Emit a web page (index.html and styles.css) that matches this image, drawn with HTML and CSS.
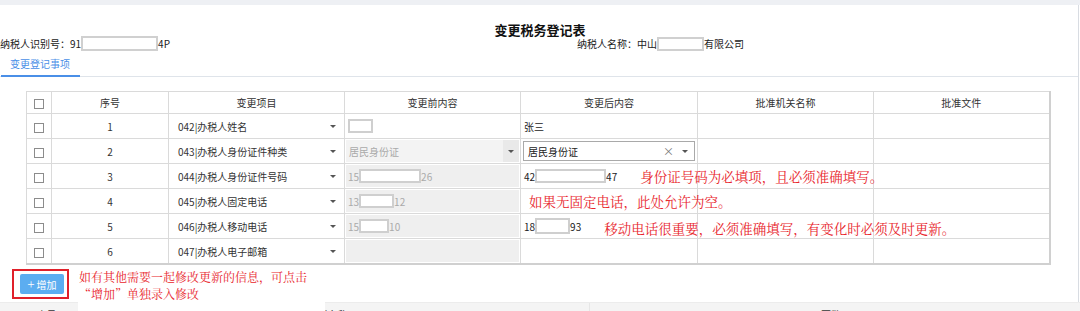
FILE: index.html
```html
<!DOCTYPE html>
<html lang="zh-CN">
<head>
<meta charset="utf-8">
<title>变更税务登记表</title>
<link rel="stylesheet" href="styles.css">
</head>
<body>
<div class="topband"></div>
<div class="main">
  <div class="head">
    <h1 class="title">变更税务登记表</h1>
    <div class="info">
      <div class="info-item">纳税人识别号：91<span class="mask mask-id"></span>4P</div>
      <div class="info-item">纳税人名称：中山<span class="mask mask-name"></span>有限公司</div>
    </div>
  </div>
  <div class="tabs"><div class="tab active">变更登记事项</div></div>
  <div class="table-wrap">
    <table class="grid">
      <colgroup>
        <col class="w-chk"><col class="w-no"><col class="w-item"><col class="w-before"><col class="w-after"><col class="w-org"><col class="w-file">
      </colgroup>
      <thead>
        <tr>
          <th><span class="chk"></span></th>
          <th>序号</th>
          <th>变更项目</th>
          <th>变更前内容</th>
          <th>变更后内容</th>
          <th>批准机关名称</th>
          <th>批准文件</th>
        </tr>
      </thead>
      <tbody>
        <tr>
          <td class="c-chk"><span class="chk"></span></td>
          <td class="c-no">1</td>
          <td class="c-sel"><div class="sel"><span>042|办税人姓名</span><i class="caret"></i></div></td>
          <td class="c-before"><div class="plain"><span class="box box-25"></span></div></td>
          <td class="c-after"><div class="val">张三</div></td>
          <td></td><td></td>
        </tr>
        <tr>
          <td class="c-chk"><span class="chk"></span></td>
          <td class="c-no">2</td>
          <td class="c-sel"><div class="sel"><span>043|办税人身份证件种类</span><i class="caret"></i></div></td>
          <td class="c-before"><div class="dis dis-sel"><span>居民身份证</span><span class="dis-arrow"><i class="caret"></i></span></div></td>
          <td class="c-after"><div class="selbox"><span>居民身份证</span><span class="selbox-tools"><span class="clear">×</span><i class="caret"></i></span></div></td>
          <td></td><td></td>
        </tr>
        <tr>
          <td class="c-chk"><span class="chk"></span></td>
          <td class="c-no">3</td>
          <td class="c-sel"><div class="sel"><span>044|办税人身份证件号码</span><i class="caret"></i></div></td>
          <td class="c-before"><div class="dis">15<span class="box box-62"></span>26</div></td>
          <td class="c-after"><div class="val">42<span class="box box-71"></span>47<span class="red-note gap">身份证号码为必填项，且必须准确填写。</span></div></td>
          <td></td><td></td>
        </tr>
        <tr>
          <td class="c-chk"><span class="chk"></span></td>
          <td class="c-no">4</td>
          <td class="c-sel"><div class="sel"><span>045|办税人固定电话</span><i class="caret"></i></div></td>
          <td class="c-before"><div class="dis">13<span class="box box-35"></span>12</div></td>
          <td class="c-after"><div class="val"><span class="red-note near">如果无固定电话，此处允许为空。</span></div></td>
          <td></td><td></td>
        </tr>
        <tr>
          <td class="c-chk"><span class="chk"></span></td>
          <td class="c-no">5</td>
          <td class="c-sel"><div class="sel"><span>046|办税人移动电话</span><i class="caret"></i></div></td>
          <td class="c-before"><div class="dis">15<span class="box box-30"></span>10</div></td>
          <td class="c-after"><div class="val">18<span class="box box-35 tall"></span>93<span class="red-note gap low">移动电话很重要，必须准确填写，有变化时必须及时更新。</span></div></td>
          <td></td><td></td>
        </tr>
        <tr>
          <td class="c-chk"><span class="chk"></span></td>
          <td class="c-no">6</td>
          <td class="c-sel"><div class="sel"><span>047|办税人电子邮箱</span><i class="caret"></i></div></td>
          <td class="c-before"><div class="dis"></div></td>
          <td class="c-after"></td>
          <td></td><td></td>
        </tr>
      </tbody>
    </table>
  </div>
  <div class="actions">
    <div class="btn-frame"><button class="btn" type="button"><span class="plus">+</span>增加</button></div>
    <div class="bottom-note">如有其他需要一起修改更新的信息，可点击<br>“增加”单独录入修改</div>
  </div>
</div>
<div class="strip">
  <div class="strip-col col-a">序号</div>
  <div class="strip-col col-b">资料名称</div>
  <div class="strip-col col-c">页数</div>
</div>
</body>
</html>
```

FILE: styles.css
```css
* {
  box-sizing: border-box;
  margin: 0;
  padding: 0;
}

body {
  margin: 0;
  width: 1080px;
  height: 311px;
  overflow: hidden;
  background: #fff;
  font-family: "Noto Sans CJK SC", "Noto Sans", sans-serif;
  font-size: 10px;
  color: #333;
}

.topband {
  height: 5px;
  background: #eef0f4;
}

.main {
  width: 1079px;
  border-right: 1px solid #d8dce2;
}

.head {
  padding-top: 17px;
}

.title {
  font-size: 13px;
  line-height: 16px;
  font-weight: 700;
  text-align: center;
  color: #111;
  padding-left: 2px;
}

.info {
  display: grid;
  grid-template-columns: 577px auto;
  height: 15px;
  margin-top: -2px;
  color: #222;
}

.info-item {
  display: flex;
  align-items: center;
  white-space: nowrap;
  line-height: 14px;
}

.mask {
  display: inline-block;
  flex-shrink: 0;
  background: #fff;
  border: 2px solid #d0d0d0;
}

.mask-id {
  width: 77px;
  height: 15px;
}

.mask-name {
  width: 47px;
  height: 14px;
}

.tabs {
  display: flex;
  border-bottom: 1px solid #dfe4ea;
}

.tab {
  margin-left: 1px;
  width: 79px;
  padding: 6px 0 4px 9px;
  line-height: 14px;
  margin-bottom: -1px;
  color: #4a8fe7;
}

.tab.active {
  border-bottom: 2px solid #4a8fe7;
}

.table-wrap {
  padding: 14px 0 0 26px;
}

.grid {
  border-collapse: collapse;
  table-layout: fixed;
  width: 1023px;
  border-right: 2px solid #d0d0d0;
  border-bottom: 2px solid #d0d0d0;
}

.w-chk { width: 25px; }
.w-no { width: 117px; }
.w-item { width: 176px; }
.w-before { width: 176px; }
.w-after { width: 177px; }
.w-org { width: 176px; }
.w-file { width: 176px; }

.grid th,
.grid td {
  border: 1px solid #dadada;
  padding: 0;
  height: 25px;
  vertical-align: middle;
  white-space: nowrap;
  font-weight: 400;
  color: #333;
}

.grid th {
  height: 22px;
  text-align: center;
}

.grid tbody tr:nth-child(3) td,
.grid tbody tr:nth-child(4) td {
  height: 24px;
}

.chk {
  display: inline-block;
  width: 10px;
  height: 10px;
  border: 1px solid #8c8c8c;
  background: #fff;
  vertical-align: middle;
}

.c-chk {
  text-align: center;
}

.c-no {
  text-align: center;
}

.c-sel {
  padding: 0 8px 0 9px !important;
}

.sel {
  display: flex;
  align-items: center;
  justify-content: space-between;
}

.caret {
  display: inline-block;
  flex-shrink: 0;
  width: 0;
  height: 0;
  border-left: 3px solid transparent;
  border-right: 3px solid transparent;
  border-top: 3px solid #555;
}

.c-before {
  padding: 1px !important;
}

.plain {
  height: 22px;
  display: flex;
  align-items: center;
  padding-left: 2px;
}

.dis {
  height: 22px;
  display: flex;
  align-items: center;
  padding-left: 2px;
  background: #efefef;
  color: #aaa;
}

.dis-sel {
  justify-content: space-between;
  padding-left: 3px;
  background: #f3f3f3;
}

.dis-arrow {
  width: 16px;
  height: 100%;
  display: flex;
  align-items: center;
  justify-content: center;
  background: #e9e9e9;
}

.box {
  display: inline-block;
  flex-shrink: 0;
  height: 14px;
  border: 2px solid #cfcfcf;
  background: #fff;
}

.box.tall {
  height: 16px;
}

.box-25 { width: 25px; }
.box-30 { width: 30px; }
.box-35 { width: 35px; }
.box-62 { width: 62px; }
.box-71 { width: 71px; }

.c-after {
  padding-left: 2px !important;
}

.val {
  display: flex;
  align-items: center;
  padding-left: 1px;
  color: #222;
}

.selbox {
  display: flex;
  align-items: center;
  justify-content: space-between;
  height: 20px;
  margin-right: 2px;
  border: 1px solid #a9a9a9;
  padding: 0 6px 0 4px;
  color: #222;
}

.selbox-tools {
  display: flex;
  align-items: center;
  gap: 8px;
}

.clear {
  color: #777;
  font-size: 11px;
  line-height: 10px;
}

.red-note {
  flex-shrink: 0;
  font-family: "Noto Serif CJK SC", "Noto Serif CJK", "AR PL UMing CN", serif;
  font-size: 13.5px;
  line-height: 16px;
  color: #e8262d;
  white-space: nowrap;
}

.red-note.gap {
  margin-left: 23px;
}

.red-note.near {
  margin-left: 5px;
}

.red-note.low {
  position: relative;
  top: 2px;
}

.actions {
  display: flex;
  align-items: flex-start;
  height: 37px;
}

.btn-frame {
  margin: 4px 0 0 12px;
  border: 2px solid #e0202a;
  padding: 3px 3px 3px 6px;
}

.btn {
  display: flex;
  align-items: center;
  justify-content: center;
  width: 44px;
  height: 20px;
  border: none;
  border-radius: 2px;
  background: #5cadf0;
  color: #fff;
  font-family: "Noto Sans CJK SC", sans-serif;
  font-size: 10px;
}

.plus {
  font-size: 13px;
  line-height: 10px;
  margin-right: 2px;
  font-weight: 300;
}

.bottom-note {
  position: relative;
  z-index: 1;
  margin: 3px 0 0 9px;
  width: 247px;
  height: 50px;
  padding-left: 1px;
  background: #fff;
  font-family: "Noto Serif CJK SC", "Noto Serif CJK", "AR PL UMing CN", serif;
  font-size: 12px;
  line-height: 17px;
  color: #e8262d;
  white-space: nowrap;
}

.strip {
  display: grid;
  grid-template-columns: 93px 497px 1fr;
  height: 20px;
  background: #f4f4f4;
  border-top: 1px solid #ececec;
}

.strip-col {
  text-align: center;
  padding-top: 6px;
  line-height: 12px;
  color: #333;
}

.col-b {
  border-right: 1px solid #e6e6e6;
  padding-right: 26px;
}

.col-c {
  padding-right: 8px;
}
```
